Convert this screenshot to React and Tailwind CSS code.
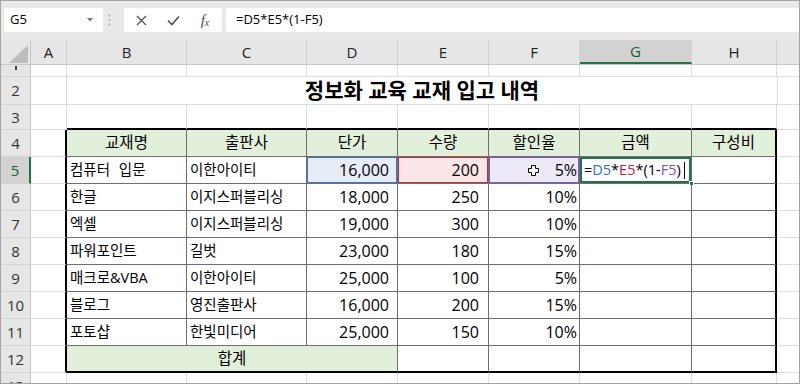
import React from 'react';

const W = {
  A: 'w-[36px]',
  B: 'w-[120px]',
  C: 'w-[120px]',
  D: 'w-[91px]',
  E: 'w-[91px]',
  F: 'w-[91px]',
  G: 'w-[112px]',
  H: 'w-[85px]',
};
const LETTERS = ['A', 'B', 'C', 'D', 'E', 'F', 'G', 'H'];

const books = [
  ['컴퓨터 입문', '이한아이티', '16,000', '200', '5%'],
  ['한글', '이지스퍼블리싱', '18,000', '250', '10%'],
  ['엑셀', '이지스퍼블리싱', '19,000', '300', '10%'],
  ['파워포인트', '길벗', '23,000', '180', '15%'],
  ['매크로&VBA', '이한아이티', '25,000', '100', '5%'],
  ['블로그', '영진출판사', '16,000', '200', '15%'],
  ['포토샵', '한빛미디어', '25,000', '150', '10%'],
];

const RowHead = ({ n, active, className = '' }) => (
  <div
    className={`w-[30px] shrink-0 h-full flex items-center justify-center border-b border-b-[#d4d4d4] text-[15px] overflow-hidden ${
      active
        ? 'bg-[#d2d2d2] border-r-2 border-r-[#217346] text-[#1d5e38]'
        : 'bg-[#e6e6e6] border-r border-r-[#c6c6c6] text-[#333]'
    } ${className}`}
  >
    {n}
  </div>
);

// plain empty grid row (used for row 1 and 3)
const BlankRow = ({ h, label, tableTop }) => (
  <div className={`flex ${h} shrink-0`}>
    {label}
    {LETTERS.map((c) => (
      <div
        key={c}
        className={`${W[c]} shrink-0 h-full border-r border-b border-[#dcdcdc] ${
          tableTop && c !== 'A' ? 'border-b-2 border-b-black' : ''
        }`}
      />
    ))}
    <div className="flex-1 h-full border-b border-[#dcdcdc]" />
  </div>
);

const Plus = () => (
  <svg width="11" height="11" viewBox="0 0 11 11" className="mr-[16px]">
    <path
      d="M3.5 0.5h4v3h3v4h-3v3h-4v-3h-3v-4h3z"
      fill="white"
      stroke="black"
      strokeWidth="1"
    />
  </svg>
);

const BodyRow = ({ n, row }) => {
  const active = n === 5;
  const cell = 'shrink-0 h-full border-r border-b border-[#6f6f6f] flex items-center';
  return (
    <div className="flex h-[27px] shrink-0">
      <RowHead n={n} active={active} />
      <div className={`${W.A} shrink-0 h-full border-b border-[#dcdcdc] border-r-2 border-r-black`} />
      <div className={`${W.B} ${cell} pl-[3px] text-[14.5px] [word-spacing:5px]`}>{row[0]}</div>
      <div className={`${W.C} ${cell} pl-[3px] text-[14.5px]`}>{row[1]}</div>
      <div className={`${W.D} ${cell}`}>
        {active ? (
          <div className="w-full h-full border border-[#4472c4] bg-[#e7edf8] flex items-center justify-end pr-[7px] text-[16px]">
            {row[2]}
          </div>
        ) : (
          <div className="w-full flex justify-end pr-[8px] text-[16px]">{row[2]}</div>
        )}
      </div>
      <div className={`${W.E} ${cell}`}>
        {active ? (
          <div className="w-full h-full border border-[#c0313c] bg-[#fae6e7] flex items-center justify-end pr-[8px] text-[16px]">
            {row[3]}
          </div>
        ) : (
          <div className="w-full flex justify-end pr-[9px] text-[16px]">{row[3]}</div>
        )}
      </div>
      <div className={`${W.F} ${cell}`}>
        {active ? (
          <div className="w-full h-full border border-[#7e57c2] bg-[#eee9f7] flex items-center justify-end pr-[1px] text-[16px]">
            <Plus />
            {row[4]}
          </div>
        ) : (
          <div className="w-full flex justify-end pr-[2px] text-[16px]">{row[4]}</div>
        )}
      </div>
      <div className={`${W.G} ${cell} relative`}>
        {active && (
          <div className="w-full h-full border-2 border-[#217346] flex items-center pl-[2px] text-[14.5px]">
            <span>=</span>
            <span className="text-[#2a6ebf]">D5</span>
            <span>*</span>
            <span className="text-[#c3213a]">E5</span>
            <span>*(1-</span>
            <span className="text-[#7b4fc0]">F5</span>
            <span>)</span>
            <span className="ml-[3px] w-px h-[17px] bg-black" />
            <span className="absolute right-[-3px] bottom-[-3px] w-[5px] h-[5px] bg-[#217346] border border-white" />
          </div>
        )}
      </div>
      <div className={`${W.H} ${cell} border-r-2 border-r-black`} />
      <div className="flex-1 h-full border-b border-[#dcdcdc]" />
    </div>
  );
};

export default function App() {
  return (
    <div className="w-[800px] h-[384px] overflow-hidden bg-white border border-[#a3a3a3] flex flex-col text-black [font-family:'Open_Sans','Noto_Sans_CJK_KR',sans-serif]">
      {/* Formula bar */}
      <div className="flex h-[39px] shrink-0 bg-[#e9e9e9] pt-[7px] pb-[8px]">
        <div className="ml-[3px] w-[99px] bg-white flex items-center justify-between pl-[6px] pr-[10px] text-[13px]">
          <span>G5</span>
          <svg width="6" height="4" viewBox="0 0 6 4">
            <path d="M0 0h6L3 3.5z" fill="#7a7a7a" />
          </svg>
        </div>
        <div className="w-[21px] flex items-center pl-[5px]">
          <svg width="3" height="12" viewBox="0 0 3 12">
            <circle cx="1.5" cy="1.5" r="1" fill="#a8a8a8" />
            <circle cx="1.5" cy="6" r="1" fill="#a8a8a8" />
            <circle cx="1.5" cy="10.5" r="1" fill="#a8a8a8" />
          </svg>
        </div>
        <div className="w-[98px] bg-white flex items-center pl-[1px]">
          <div className="w-[32px] flex justify-center">
            <svg width="11" height="11" viewBox="0 0 11 11">
              <path d="M1 1l9 9M10 1l-9 9" stroke="#505050" strokeWidth="1.2" />
            </svg>
          </div>
          <div className="w-[32px] flex justify-center">
            <svg width="13" height="11" viewBox="0 0 13 11">
              <path d="M1 5.5l3.8 4L12 1.5" stroke="#505050" strokeWidth="1.6" fill="none" />
            </svg>
          </div>
          <div className="w-[32px] flex justify-center items-end text-[#505050] italic [font-family:'Liberation_Serif',serif]">
            <span className="text-[15px] leading-none">f</span>
            <span className="text-[10px] leading-none">x</span>
          </div>
        </div>
        <div className="ml-[4px] flex-1 bg-white flex items-center pl-[10px] text-[13px]">=D5*E5*(1-F5)</div>
      </div>

      {/* Column headers */}
      <div className="flex h-[25px] shrink-0 bg-[#e6e6e6] border-b border-[#c6c6c6]">
        <div className="w-[30px] shrink-0 border-r border-[#c6c6c6] flex items-end justify-end pb-[1px] pr-[1px]">
          <svg width="20" height="18" viewBox="0 0 20 18">
            <path d="M19 0V18H0z" fill="#bdbdbd" />
          </svg>
        </div>
        {LETTERS.map((c) => (
          <div
            key={c}
            className={`${W[c]} shrink-0 flex items-center justify-center border-r border-[#d2d2d2] text-[15px] ${
              c === 'G' ? 'bg-[#d2d2d2] border-b-2 border-b-[#217346] text-[#1d5e38]' : 'text-[#222]'
            }`}
          >
            {c}
          </div>
        ))}
        <div className="flex-1" />
      </div>

      {/* Row 1 (mostly scrolled away) */}
      <BlankRow
        h="h-[12px]"
        label={
          <div className="w-[30px] shrink-0 h-full bg-[#e6e6e6] border-r border-b border-r-[#c6c6c6] border-b-[#d4d4d4] flex justify-center">
            <span className="w-[2px] h-[4px] mt-[1px] bg-[#444]" />
          </div>
        }
      />

      {/* Row 2 title */}
      <div className="flex h-[28px] shrink-0">
        <RowHead n={2} />
        <div className={`${W.A} shrink-0 h-full border-r border-b border-[#dcdcdc]`} />
        <div className="w-[710px] shrink-0 h-full border-b border-[#dcdcdc] flex items-center justify-center text-[21px] font-bold">
          정보화 교육 교재 입고 내역
        </div>
        <div className="flex-1 h-full border-l border-b border-[#dcdcdc]" />
      </div>

      {/* Row 3 */}
      <BlankRow h="h-[25px]" label={<RowHead n={3} />} tableTop />

      {/* Row 4 header */}
      <div className="flex h-[27px] shrink-0">
        <RowHead n={4} />
        <div className={`${W.A} shrink-0 h-full border-b border-[#dcdcdc] border-r-2 border-r-black`} />
        {['교재명', '출판사', '단가', '수량', '할인율', '금액', '구성비'].map((t, i) => (
          <div
            key={t}
            className={`${W[LETTERS[i + 1]]} shrink-0 h-full border-r border-b border-[#6f6f6f] bg-[#e2efda] flex items-center justify-center text-[15.5px] ${
              i === 6 ? 'border-r-2 border-r-black' : ''
            }`}
          >
            {t}
          </div>
        ))}
        <div className="flex-1 h-full border-b border-[#dcdcdc]" />
      </div>

      {books.map((row, i) => (
        <BodyRow key={i} n={i + 5} row={row} />
      ))}

      {/* Row 12 total */}
      <div className="flex h-[27px] shrink-0">
        <RowHead n={12} />
        <div className={`${W.A} shrink-0 h-full border-b border-[#dcdcdc] border-r-2 border-r-black`} />
        <div className="w-[331px] shrink-0 h-full border-r border-[#6f6f6f] border-b-2 border-b-black bg-[#e2efda] flex items-center justify-center text-[15.5px]">
          합계
        </div>
        {['E', 'F', 'G'].map((c) => (
          <div key={c} className={`${W[c]} shrink-0 h-full border-r border-[#6f6f6f] border-b-2 border-b-black`} />
        ))}
        <div className={`${W.H} shrink-0 h-full border-r-2 border-b-2 border-black`} />
        <div className="flex-1 h-full border-b border-[#dcdcdc]" />
      </div>

      {/* Row 13 (cut off) */}
      <div className="flex flex-1">
        <div className="w-[30px] shrink-0 h-full bg-[#e6e6e6] border-r border-[#c6c6c6] flex justify-center pt-[6px] text-[15px] leading-[15px] text-[#333] overflow-hidden">
          13
        </div>
        {LETTERS.map((c) => (
          <div key={c} className={`${W[c]} shrink-0 h-full border-r border-[#dcdcdc]`} />
        ))}
        <div className="flex-1" />
      </div>
    </div>
  );
}
